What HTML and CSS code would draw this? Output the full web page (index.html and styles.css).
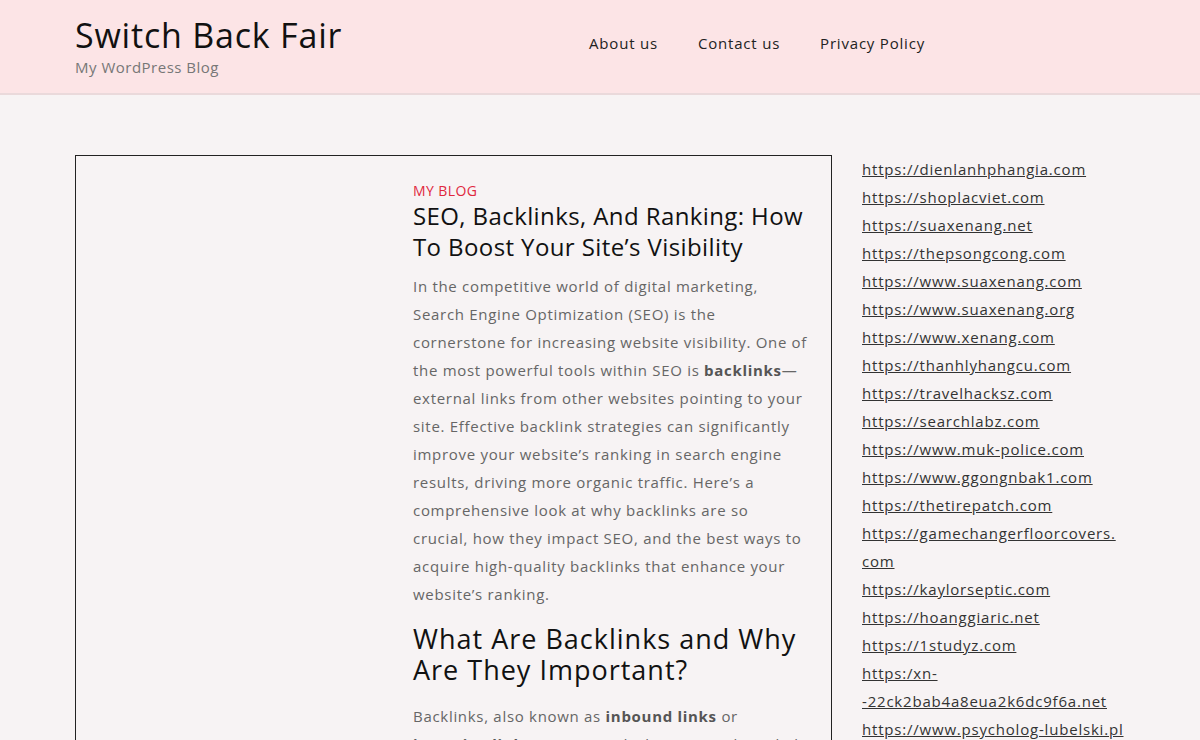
FILE: index.html
```html
<!DOCTYPE html>
<html>
<head>
    <title>Switch Back Fair</title>
    <meta charset="UTF-8">
    <link rel="stylesheet" href="styles.css">
</head>
<body>
    <header class="site-header">
        <div class="wrap header-inner">
            <div class="branding">
                <div class="site-title">Switch Back Fair</div>
                <div class="site-desc">My WordPress Blog</div>
            </div>
            <nav class="main-nav">
                <a href="#">About us</a>
                <a href="#">Contact us</a>
                <a href="#">Privacy Policy</a>
            </nav>
        </div>
    </header>

    <div class="wrap content">
        <article class="post">
            <div class="post-thumb"></div>
            <div class="post-body">
                <div class="post-cat">MY BLOG</div>
                <h1 class="post-title">SEO, Backlinks, And Ranking: How To Boost Your Site’s Visibility</h1>
                <p>In the competitive world of digital marketing, Search Engine Optimization (SEO) is the cornerstone for increasing website visibility. One of the most powerful tools within SEO is <strong>backlinks</strong>—external links from other websites pointing to your site. Effective backlink strategies can significantly improve your website’s ranking in search engine results, driving more organic traffic. Here’s a comprehensive look at why backlinks are so<br>crucial, how they impact SEO, and the best ways to acquire high-quality backlinks that enhance your website’s ranking.</p>
                <h2>What Are Backlinks and Why Are They Important?</h2>
                <p>Backlinks, also known as <strong>inbound links</strong> or <strong>incoming links</strong>, are created when one website links to another.</p>
            </div>
        </article>

        <aside class="sidebar">
            <a href="#">https://dienlanhphangia.com</a>
            <a href="#">https://shoplacviet.com</a>
            <a href="#">https://suaxenang.net</a>
            <a href="#">https://thepsongcong.com</a>
            <a href="#">https://www.suaxenang.com</a>
            <a href="#">https://www.suaxenang.org</a>
            <a href="#">https://www.xenang.com</a>
            <a href="#">https://thanhlyhangcu.com</a>
            <a href="#">https://travelhacksz.com</a>
            <a href="#">https://searchlabz.com</a>
            <a href="#">https://www.muk-police.com</a>
            <a href="#">https://www.ggongnbak1.com</a>
            <a href="#">https://thetirepatch.com</a>
            <a href="#">https://gamechangerfloorcovers.<br>com</a>
            <a href="#">https://kaylorseptic.com</a>
            <a href="#">https://hoanggiaric.net</a>
            <a href="#">https://1studyz.com</a>
            <a href="#">https:/xn-<br>-22ck2bab4a8eua2k6dc9f6a.net</a>
            <a href="#">https://www.psycholog-lubelski.pl</a>
        </aside>
    </div>
</body>
</html>
```

FILE: styles.css
```css
body {
    margin: 0;
    background: #f7f3f4;
    font-family: "Open Sans", "Noto Sans", sans-serif;
    color: #222;
}
a {
    color: inherit;
    text-decoration: none;
}
.wrap {
    width: 1050px;
    margin: 0 auto;
}
.site-header {
    background: #fce4e6;
    border-bottom: 2px solid #ead9db;
    height: 93px;
}
.header-inner {
    display: flex;
    justify-content: space-between;
    align-items: flex-start;
}
.branding {
    padding-top: 14px;
}
.site-title {
    font-size: 34px;
    line-height: 42px;
    color: #111;
    letter-spacing: 0.8px;
}
.site-desc {
    font-size: 15px;
    line-height: 22px;
    color: #777;
    letter-spacing: 0.5px;
}
.main-nav {
    display: flex;
    gap: 40px;
    padding: 32px 200px 0 0;
}
.main-nav a {
    font-size: 15px;
    line-height: 22px;
    letter-spacing: 0.8px;
    color: #222;
}
.content {
    display: flex;
    gap: 30px;
    padding-top: 60px;
}
.post {
    width: 755px;
    height: 700px;
    border: 1px solid #222;
    display: flex;
    gap: 24px;
    flex-shrink: 0;
}
.post-thumb {
    width: 313px;
    flex-shrink: 0;
}
.post-body {
    width: 400px;
    padding-top: 26px;
}
.post-cat {
    color: #e0283e;
    font-size: 14px;
    line-height: 18px;
    letter-spacing: 0.4px;
}
.post-title {
    font-size: 24px;
    line-height: 31px;
    font-weight: 400;
    color: #111;
    margin: 0 0 10px;
    letter-spacing: 0.4px;
}
.post-body p {
    font-size: 15px;
    line-height: 28px;
    color: #666;
    letter-spacing: 0.7px;
    margin: 0 0 15px;
}
.post-body p strong {
    color: #555;
}
.post-body h2 {
    font-size: 27px;
    line-height: 31px;
    font-weight: 400;
    color: #111;
    margin: 0 0 17px;
    letter-spacing: 1px;
}
.sidebar {
    flex: 1;
    display: flex;
    flex-direction: column;
    align-items: flex-start;
}
.sidebar a {
    font-size: 15px;
    line-height: 28px;
    color: #333;
    text-decoration: underline;
    letter-spacing: 0.8px;
    white-space: nowrap;
}
```
